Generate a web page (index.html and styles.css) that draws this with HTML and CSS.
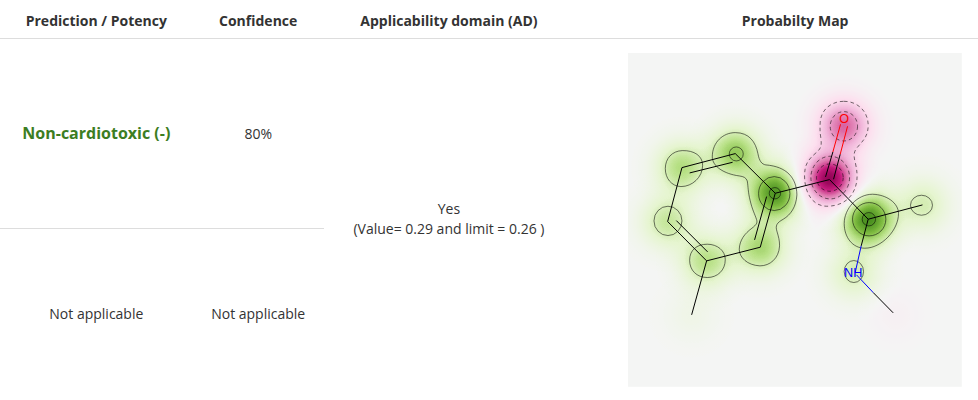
FILE: index.html
```html
<!DOCTYPE html>
<html lang="en">
<head>
<meta charset="utf-8">
<title>Cardiotoxicity prediction</title>
<meta name="viewport" content="width=device-width, initial-scale=1">
<link rel="stylesheet" href="styles.css">
</head>
<body>
<table class="results">
  <colgroup>
    <col class="col-prediction">
    <col class="col-confidence">
    <col class="col-domain">
    <col class="col-map">
  </colgroup>
  <thead>
    <tr>
      <th scope="col">Prediction / Potency</th>
      <th scope="col">Confidence</th>
      <th scope="col" class="domain">Applicability domain (AD)</th>
      <th scope="col">Probabilty Map</th>
    </tr>
  </thead>
  <tbody>
    <tr class="row-main">
      <td class="ruled"><strong class="verdict">Non-cardiotoxic (-)</strong></td>
      <td class="ruled">80%</td>
      <td class="domain" rowspan="2">Yes<br>(Value= 0.29 and limit = 0.26 )</td>
      <td class="map-cell" rowspan="2">
        <svg class="map" viewBox="24 38 1002 1002" role="img" aria-label="Probability map of the molecule">
          <defs>
            <radialGradient id="bell">
              <stop offset="0" stop-color="#fff" stop-opacity="1"/>
              <stop offset=".1" stop-color="#fff" stop-opacity=".956"/>
              <stop offset=".2" stop-color="#fff" stop-opacity=".835"/>
              <stop offset=".3" stop-color="#fff" stop-opacity=".667"/>
              <stop offset=".4" stop-color="#fff" stop-opacity=".487"/>
              <stop offset=".5" stop-color="#fff" stop-opacity=".325"/>
              <stop offset=".6" stop-color="#fff" stop-opacity=".198"/>
              <stop offset=".7" stop-color="#fff" stop-opacity=".11"/>
              <stop offset=".8" stop-color="#fff" stop-opacity=".056"/>
              <stop offset=".9" stop-color="#fff" stop-opacity=".022"/>
              <stop offset="1" stop-color="#fff" stop-opacity="0"/>
            </radialGradient>
            <radialGradient id="dip">
              <stop offset="0" stop-color="#000" stop-opacity="1"/>
              <stop offset=".1" stop-color="#000" stop-opacity=".956"/>
              <stop offset=".2" stop-color="#000" stop-opacity=".835"/>
              <stop offset=".3" stop-color="#000" stop-opacity=".667"/>
              <stop offset=".4" stop-color="#000" stop-opacity=".487"/>
              <stop offset=".5" stop-color="#000" stop-opacity=".325"/>
              <stop offset=".6" stop-color="#000" stop-opacity=".198"/>
              <stop offset=".7" stop-color="#000" stop-opacity=".11"/>
              <stop offset=".8" stop-color="#000" stop-opacity=".056"/>
              <stop offset=".9" stop-color="#000" stop-opacity=".022"/>
              <stop offset="1" stop-color="#000" stop-opacity="0"/>
            </radialGradient>
            <!-- Grey level to pink / neutral / green scale -->
            <filter id="scale" filterUnits="userSpaceOnUse" x="24" y="38" width="1002" height="1002" color-interpolation-filters="sRGB">
              <feComponentTransfer>
                <feFuncR type="table" tableValues=".557 .773 .871 .945 .992 .961 .902 .722 .498 .302 .153"/>
                <feFuncG type="table" tableValues=".004 .106 .467 .714 .878 .961 .961 .882 .737 .573 .392"/>
                <feFuncB type="table" tableValues=".322 .49 .682 .855 .937 .961 .816 .525 .255 .129 .098"/>
              </feComponentTransfer>
            </filter>
          </defs>
          <g filter="url(#scale)">
            <rect x="24" y="38" width="1002" height="1002" fill="#808080"/>
            <g fill="url(#bell)">
              <circle cx="186" cy="382" r="160" fill-opacity=".42"/>
              <circle cx="346" cy="340" r="160" fill-opacity=".53"/>
              <circle cx="465" cy="459" r="160" fill-opacity=".79"/>
              <circle cx="421" cy="621" r="160" fill-opacity=".46"/>
              <circle cx="260" cy="662" r="160" fill-opacity=".4"/>
              <circle cx="143" cy="544" r="160" fill-opacity=".34"/>
              <circle cx="215" cy="824" r="160" fill-opacity=".07"/>
              <circle cx="745" cy="537" r="160" fill-opacity=".82"/>
              <circle cx="908" cy="494" r="160" fill-opacity=".28"/>
              <circle cx="702" cy="697" r="160" fill-opacity=".27"/>
            </g>
            <g fill="url(#dip)">
              <circle cx="629" cy="415" r="160" fill-opacity=".98"/>
              <circle cx="672" cy="257" r="160" fill-opacity=".65"/>
              <circle cx="828" cy="826" r="150" fill-opacity=".05"/>
            </g>
          </g>
          <g class="contour">
            <path d="M346 277C388 277 407 305 414 340C418 362 425 372 438 374C500 379 530 412 531 464C529 500 512 524 490 537C470 548 466 556 471 573C476 590 479 600 479 617C477 655 450 677 420 677C382 675 358 652 358 627C359 600 374 580 396 564C410 553 413 548 410 538C404 520 397 508 391 482C384 455 385 440 382 422C378 412 372 409 358 407C312 401 277 378 277 350C277 305 310 277 346 277Z"/>
            <path d="M187 331C223 330 248 347 248 375C248 411 217 439 183 439C155 438 136 415 136 385C136 354 157 332 187 331Z"/>
            <ellipse cx="144" cy="542" rx="42" ry="44"/>
            <path d="M262 612C293 612 316 632 316 658C316 690 293 712 262 712C230 712 209 690 209 660C209 630 230 612 262 612Z"/>
            <circle cx="349" cy="341" r="21"/>
            <ellipse cx="463" cy="460" rx="47" ry="51"/>
            <circle cx="465" cy="459" r="17"/>
            <path d="M758 462C800 463 836 488 836 520C836 570 785 624 735 624C698 624 673 591 673 550C673 505 712 462 758 462Z"/>
            <circle cx="748" cy="537" r="50"/>
            <circle cx="747" cy="537" r="20"/>
            <ellipse cx="905" cy="495" rx="33" ry="30"/>
            <ellipse cx="702" cy="694" rx="29" ry="33"/>
          </g>
          <g class="contour dashed">
            <path d="M672 183C714 183 745 214 745 255C745 290 728 302 711 323C701 335 701 348 706 366C718 415 709 440 697 461C681 485 654 498 620 498C576 497 554 455 554 407C554 372 565 358 588 338C603 325 606 318 603 294C600 275 600 265 601 245C604 207 635 183 672 183Z"/>
            <ellipse cx="672" cy="258" rx="41" ry="44"/>
            <ellipse cx="631" cy="412" rx="58" ry="64"/>
            <ellipse cx="630" cy="412" rx="40" ry="41"/>
          </g>
          <g class="bond">
            <path d="M466 459L346 340L186 382L143 544L260 662L421 621L466 459L629 418L745 537L908 494M338 366L209 398M169 541L263 635M404 599L440 469M260 662L215 824M617 410L639 335M641 417L661 342M745 537L724 617M760 757L820 818"/>
            <path class="oxygen" d="M639 335L662 252M661 342L683 258"/>
            <path class="nitrogen" d="M724 617L706 697M710 704L760 757"/>
          </g>
          <text class="atom oxygen" x="673" y="248">O</text>
          <text class="atom nitrogen" x="700" y="710">NH</text>
        </svg>
      </td>
    </tr>
    <tr>
      <td>Not applicable</td>
      <td>Not applicable</td>
    </tr>
  </tbody>
</table>
</body>
</html>
```

FILE: styles.css
```css
body {
  margin: 0;
  background: #fff;
  color: #333;
  font-family: "Open Sans", "Noto Sans", sans-serif;
  font-size: 14px;
  line-height: 20px;
}

.results {
  width: 100%;
  table-layout: fixed;
  border-collapse: separate;
  border-spacing: 0;
  text-align: center;
}

.col-prediction { width: 19.7%; }
.col-confidence { width: 13.4%; }
.col-domain { width: 29.5%; }
.col-map { width: 37.4%; }

th {
  padding: 11px 8px 7px;
  border-bottom: 1px solid #ddd;
  font-weight: 700;
}

td {
  padding: 8px;
  vertical-align: middle;
}

.results .domain { padding-right: 46px; }
.domain { white-space: nowrap; }

.row-main { height: 190px; }
.ruled { border-bottom: 1px solid #ddd; }

.verdict {
  color: #3c7d22;
  font-size: 16px;
  font-weight: 700;
}

.map-cell { padding: 14px 16px 13px; }

.map {
  display: block;
  width: 100%;
  height: auto;
}

.contour {
  fill: none;
  stroke: #000;
  stroke-opacity: 0.55;
  stroke-width: 3;
}

.dashed { stroke-dasharray: 11 9; }

.bond {
  fill: none;
  stroke: #000;
  stroke-width: 3;
}

.bond .oxygen { stroke: #f00; }
.bond .nitrogen { stroke: #00f; }

.atom {
  font-family: "Liberation Sans", sans-serif;
  font-size: 38px;
  text-anchor: middle;
}

text.oxygen { fill: #f00; }
text.nitrogen { fill: #00f; }
```
